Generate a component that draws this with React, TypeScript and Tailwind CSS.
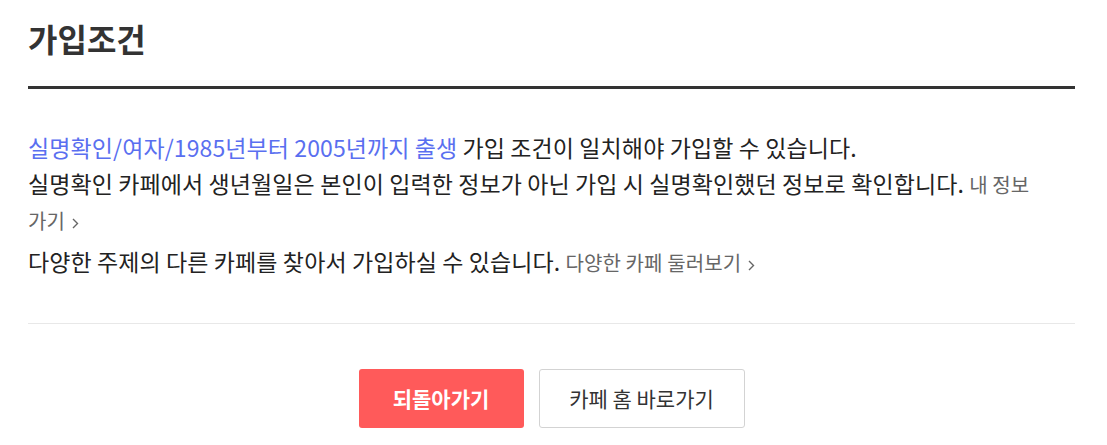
const font = {
  fontFamily: '"Noto Sans CJK KR", "Noto Sans", sans-serif',
};

function Chevron() {
  return (
    <svg
      width="7"
      height="11"
      viewBox="0 0 7 11"
      className="ml-[7px] inline-block align-[0px]"
      fill="none"
      stroke="#666"
      strokeWidth="1.4"
    >
      <path d="M1 1l4.5 4.5L1 10" />
    </svg>
  );
}

function MoreLink({ label, last }: { label: string; last: string }) {
  return (
    <a href="#" className="text-[20px] leading-[20px] text-[#666] no-underline">
      {label}{' '}
      <span className="whitespace-nowrap">
        {last}
        <Chevron />
      </span>
    </a>
  );
}

export default function App() {
  return (
    <div className="min-h-[445px] bg-white pl-[28px] pr-[32px] text-[#222]" style={font}>
      <div className="h-[89px] border-b-[3px] border-[#333] pt-[17px]">
        <h2 className="text-[32px] font-bold leading-[42px] text-[#333]">가입조건</h2>
      </div>

      <div className="border-b border-[#e8e8e8] pt-[40px] pb-[44px] text-[23px] leading-[36px] tracking-[0.1px]">
        <p>
          <span className="text-[#5a6ff0]">실명확인/여자/1985년부터 2005년까지 출생</span> 가입 조건이
          일치해야 가입할 수 있습니다.
          <br />
          실명확인 카페에서 생년월일은 본인이 입력한 정보가 아닌 가입 시 실명확인했던 정보로
          확인합니다. <MoreLink label="내 정보" last="가기" />
        </p>
        <p className="mt-[6px]">
          다양한 주제의 다른 카페를 찾아서 가입하실 수 있습니다.{' '}
          <MoreLink label="다양한 카페" last="둘러보기" />
        </p>
      </div>

      <div className="flex justify-center gap-[15px] pt-[45px]">
        <button className="h-[59px] w-[165px] rounded-[3px] bg-[#ff5a5a] text-[21px] font-bold text-white">
          되돌아가기
        </button>
        <button className="h-[59px] w-[206px] rounded-[3px] border border-[#d3d3d3] bg-white text-[21px] text-[#333]">
          카페 홈 바로가기
        </button>
      </div>
    </div>
  );
}
